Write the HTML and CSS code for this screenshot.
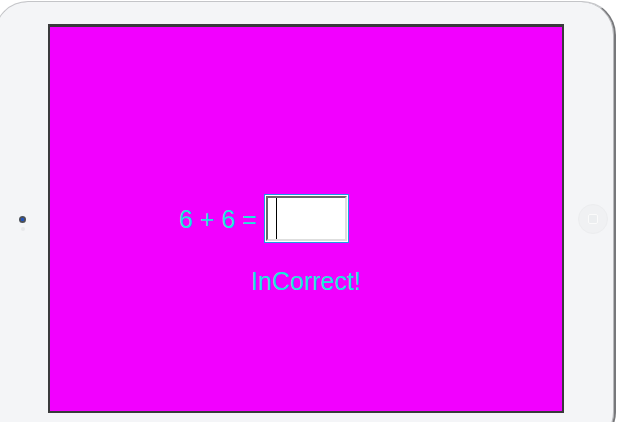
FILE: index.html
```html
<!DOCTYPE html>
<html>
<head>
<meta charset="utf-8">
<link rel="stylesheet" href="styles.css">
</head>
<body>
<div class="device">
  <div class="bezel bezel-left">
    <div class="sensors">
      <span class="camera"></span>
      <span class="light"></span>
    </div>
  </div>
  <div class="screen">
    <div class="question">
      <span class="label">6 + 6 =</span>
      <div class="answer"><div class="field"><span class="caret"></span></div></div>
    </div>
    <div class="result">InCorrect!</div>
  </div>
  <div class="bezel bezel-right">
    <div class="home"><span class="home-square"></span></div>
  </div>
</div>
</body>
</html>
```
FILE: styles.css
```css
html, body {
  margin: 0;
  padding: 0;
  background: #ffffff;
  overflow: hidden;
  width: 618px;
  height: 422px;
}

.device {
  display: flex;
  align-items: stretch;
  box-sizing: border-box;
  width: 622px;
  margin: 1px 0 0 -6px;
  padding: 22px 0 32px 0;
  background: #f4f5f7;
  border: 1px solid #c4c5c8;
  border-right: 2px solid #77787b;
  border-radius: 34px;
  box-shadow: inset -1px 0 0 #b8b9bc;
}

.bezel {
  display: flex;
  align-items: center;
  justify-content: center;
}

.bezel-left {
  width: 53px;
  justify-content: flex-start;
}

.sensors {
  display: flex;
  flex-direction: column;
  align-items: center;
  gap: 4px;
  margin-left: 24px;
  margin-top: 10px;
}

.camera {
  width: 7px;
  height: 7px;
  border-radius: 50%;
  background: radial-gradient(circle, #2352b8 0, #2352b8 1.5px, #4c5158 2px);
}

.light {
  width: 4px;
  height: 4px;
  border-radius: 50%;
  background: #e8e9eb;
}

.bezel-right {
  width: 50px;
  justify-content: flex-start;
}

.home {
  width: 28px;
  height: 28px;
  margin-left: 14px;
  border-radius: 50%;
  background: #f0f1f3;
  border: 1px solid #ecedef;
  display: flex;
  align-items: center;
  justify-content: center;
}

.home-square {
  width: 8px;
  height: 8px;
  border: 1px solid #fbfbfb;
  border-radius: 2px;
  background: #eceef0;
}

.screen {
  box-sizing: border-box;
  width: 516px;
  height: 389px;
  border: 2px solid #3a3a3c;
  border-top-width: 3px;
  background: #f200ff;
  display: flex;
  flex-direction: column;
  align-items: center;
  padding-top: 167px;
  font-family: "Liberation Sans", Arial, sans-serif;
  color: #1ae8dc;
}

.question {
  display: flex;
  align-items: center;
  gap: 7px;
  padding-right: 84px;
}

.label {
  font-size: 25px;
  line-height: 28px;
}

.answer {
  box-sizing: border-box;
  width: 85px;
  height: 49px;
  border: 1px solid #1a9fe6;
  padding: 1px;
  background: #ffffff;
  display: flex;
}

.field {
  flex: 1;
  border: 2px solid;
  border-color: #67686a #dedede #dedede #67686a;
  padding-left: 8px;
  display: flex;
}

.caret {
  width: 1px;
  background: #000000;
}

.result {
  margin-top: 24px;
  font-size: 25px;
  line-height: 28px;
}
```
